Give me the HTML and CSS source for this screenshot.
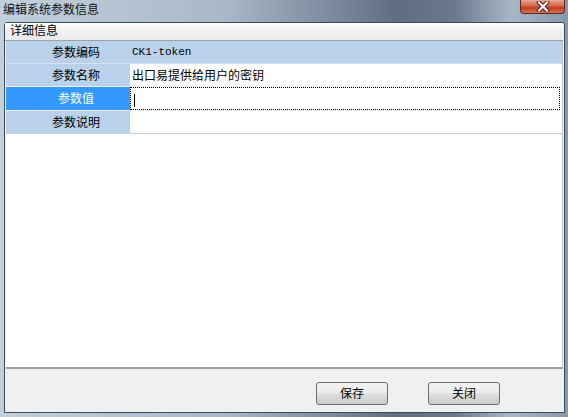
FILE: index.html
```html
<!DOCTYPE html>
<html lang="zh-CN">
<head>
  <meta charset="UTF-8">
  <title>编辑系统参数信息</title>
  <link rel="stylesheet" href="styles.css">
</head>
<body>

<div class="window">
  <div class="titlebar">
    <span class="title">编辑系统参数信息</span>
    <span class="close-btn">
      <svg width="14" height="11" viewBox="0 0 14 11">
        <path d="M3 1.5 L11 9.5 M11 1.5 L3 9.5" stroke="#4a1a10" stroke-width="4" stroke-linecap="square"/>
        <path d="M3 1.5 L11 9.5 M11 1.5 L3 9.5" stroke="#ffffff" stroke-width="2.2" stroke-linecap="square"/>
      </svg>
    </span>
  </div>

  <div class="client">
    <div class="group">
      <div class="group-title">详细信息</div>
      <div class="sheet">
        <div class="row row-head">
          <div class="label">参数编码</div>
          <div class="value mono">CK1-token</div>
        </div>
        <div class="row">
          <div class="label">参数名称</div>
          <div class="value">出口易提供给用户的密钥</div>
        </div>
        <div class="row row-active">
          <div class="label">参数值</div>
          <div class="value"><span class="caret"></span></div>
        </div>
        <div class="row row-last">
          <div class="label">参数说明</div>
          <div class="value"></div>
        </div>
      </div>
    </div>

    <div class="buttons">
      <span class="btn">保存</span>
      <span class="btn">关闭</span>
    </div>
  </div>
</div>

</body>
</html>
```

FILE: styles.css
```css
body {
  margin: 0;
  padding: 0;
  width: 568px;
  height: 417px;
  overflow: hidden;
  font-family: "Noto Sans CJK SC", "Liberation Sans", sans-serif;
  font-size: 12px;
  color: #000;
  background: linear-gradient(90deg, #c2cfdc 0%, #a9b8c8 40%, #5e6d80 70%, #6a7a8c 80%, #a8b7c8 90%, #8798ab 100%);
}

.window {
  display: flex;
  flex-direction: column;
  height: 417px;
}

.titlebar {
  height: 22px;
  display: flex;
  justify-content: space-between;
  align-items: flex-start;
}

.title {
  padding-left: 3px;
  line-height: 17px;
  color: #111;
}

.close-btn {
  width: 45px;
  height: 14px;
  margin-right: 3px;
  box-sizing: border-box;
  border: 1px solid #5b2a22;
  border-top: none;
  border-radius: 0 0 4px 4px;
  background: linear-gradient(180deg, #e9a796 0%, #d4654b 45%, #c23c20 60%, #d9735a 100%);
  display: flex;
  justify-content: center;
  align-items: center;
}

.client {
  margin: 0 3px 4px 4px;
  flex: 1;
  display: flex;
  flex-direction: column;
  background: #f0f0f0;
  border: 1px solid #3c4a5a;
  border-radius: 3px 3px 0 0;
}

.group {
  flex: 1;
  display: flex;
  flex-direction: column;
  margin: 0 1px 0 0;
}

.group-title {
  height: 17px;
  line-height: 14px;
  padding-left: 5px;
  background: linear-gradient(180deg, #ffffff 0%, #f2f2f2 40%, #eaeaea 100%);
  border-bottom: 1px solid #a0a0a0;
}

.sheet {
  flex: 1;
  background: #fff;
  border-bottom: 2px solid #a0a0a0;
  border-right: 1px solid #c8c8c8;
  margin-left: 1px;
}

.row {
  display: flex;
  height: 22px;
  border-bottom: 1px solid #eef2f7;
}

.label {
  width: 124px;
  padding-left: 16px;
  box-sizing: border-box;
  text-align: center;
  line-height: 22px;
  background: #b9d1ea;
}

.value {
  flex: 1;
  padding-left: 2px;
  line-height: 22px;
}

.row-head {
  background: #b9d1ea;
  border-bottom: 1px solid #d6e2f0;
}

.row-last {
  border-bottom: 1px solid #c4d0dc;
}

.mono {
  font-family: "Liberation Mono", "DejaVu Sans Mono", monospace;
  font-size: 11px;
}

.row-active {
  height: 23px;
}

.row-active .label {
  background: #3399ff;
  color: #fff;
}

.row-active .value {
  border: 1px dotted #000;
  margin-right: 2px;
  line-height: 21px;
}

.caret {
  display: inline-block;
  width: 1px;
  height: 13px;
  background: #000;
  vertical-align: middle;
  margin-left: 1px;
}

.buttons {
  height: 43px;
  display: flex;
  align-items: center;
  padding-top: 5px;
  box-sizing: border-box;
  padding-left: 311px;
  gap: 40px;
}

.btn {
  width: 72px;
  height: 23px;
  box-sizing: border-box;
  border: 1px solid #707070;
  border-radius: 3px;
  background: linear-gradient(180deg, #f4f4f4 0%, #ebebeb 48%, #dddddd 52%, #cfcfcf 100%);
  text-align: center;
  line-height: 20px;
}
```
